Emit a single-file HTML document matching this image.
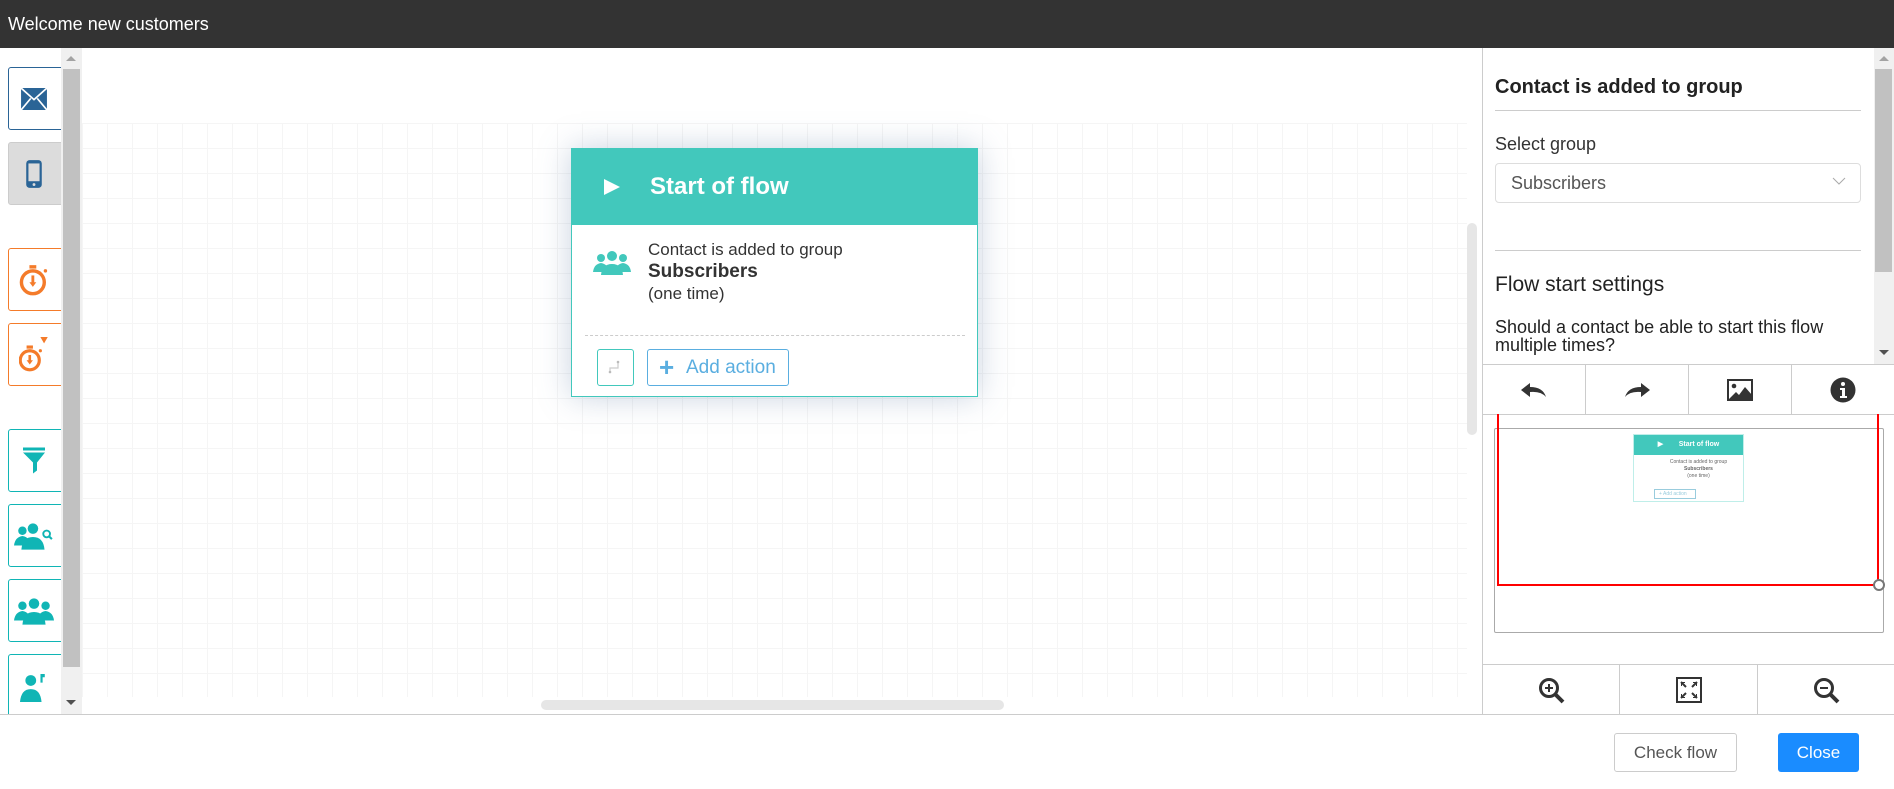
<!DOCTYPE html>
<html><head><meta charset="utf-8"><style>
*{box-sizing:border-box;margin:0;padding:0}
body{width:1894px;height:789px;overflow:hidden;background:#fff;font-family:"Liberation Sans",sans-serif;position:relative;color:#333}
.abs{position:absolute}
.hdr{left:0;top:0;width:1894px;height:48px;background:#333;color:#fff;font-size:18px;line-height:48px;padding-left:8px}
.sb{left:8px;width:60px;height:63px;border:1px solid;border-radius:3px;background:#fff;display:flex;align-items:center;justify-content:center;padding-right:8px}
.grid{left:82px;top:123px;width:1385px;height:574px;background-color:#fff;background-image:linear-gradient(#f5f5f5 1px,transparent 1px),linear-gradient(90deg,#f5f5f5 1px,transparent 1px);background-size:25px 25px}
.card{left:571px;top:148px;width:407px;height:249px;border:1px solid #42c8bc;background:#fff;box-shadow:0 0 30px rgba(100,130,170,.35)}
.tb{display:flex;align-items:center;justify-content:center;border-right:1px solid #ccc}
</style></head><body>
<div class="abs hdr">Welcome new customers</div>

<!-- left sidebar -->
<div class="abs" style="left:0;top:48px;width:82px;height:666px;background:#fff;border-right:1px solid #ccc;overflow:hidden">
<div class="abs sb" style="top:19px;border-color:#2a6496"><svg width="26" height="22" viewBox="0 0 20 17"><rect x="0" y="0" width="20" height="17" fill="#2a6496"/><path d="M0 0L10 9L20 0M0 17L7.5 8M20 17L12.5 8" stroke="#fff" stroke-width="1.3" fill="none"/></svg></div>
<div class="abs sb" style="top:94px;border-color:#ccc;background:#dcdcdc"><svg width="18" height="30" viewBox="0 0 16 27"><rect x="1" y="1" width="14" height="25" rx="3" fill="#2a6496"/><rect x="3" y="4" width="10" height="16" fill="#dcdcdc"/><circle cx="8" cy="23" r="1.3" fill="#dcdcdc"/></svg></div>
<div class="abs sb" style="top:200px;border-color:#f47b2a"><svg width="30" height="32" viewBox="0 0 26 28"><circle cx="12" cy="16" r="10" fill="none" stroke="#f47b2a" stroke-width="3"/><rect x="9" y="1" width="6" height="3" fill="#f47b2a"/><circle cx="23" cy="6" r="1.5" fill="#f47b2a"/><path d="M12 10v7" stroke="#f47b2a" stroke-width="2.5"/><path d="M9 16l3 4 3-4z" fill="#f47b2a"/></svg></div>
<div class="abs sb" style="top:275px;border-color:#f47b2a"><svg width="30" height="36" viewBox="0 0 28 34"><circle cx="10" cy="22" r="9" fill="none" stroke="#f47b2a" stroke-width="3"/><rect x="7" y="8" width="6" height="3" fill="#f47b2a"/><circle cx="20" cy="13" r="1.5" fill="#f47b2a"/><path d="M10 17v6" stroke="#f47b2a" stroke-width="2.5"/><path d="M7 22l3 4 3-4z" fill="#f47b2a"/><path d="M20 0h7l-3.5 6z" fill="#f47b2a"/></svg></div>
<div class="abs sb" style="top:381px;border-color:#10b5b5"><svg width="22" height="27" viewBox="0 0 22 26"><rect x="0" y="0" width="22" height="3" fill="#10b5b5"/><path d="M0 5h22l-8 10v8l-4 3V15z" fill="#10b5b5"/></svg></div>
<div class="abs sb" style="top:456px;border-color:#10b5b5"><svg width="40" height="28" viewBox="0 0 38 26"><g fill="#10b5b5"><circle cx="8" cy="8" r="4"/><path d="M0 22q1-8 8-9q7 1 8 9z"/><circle cx="18" cy="6" r="5"/><path d="M7 26q1-12 11-12q10 0 11 12z"/></g><circle cx="31" cy="11" r="3.2" fill="none" stroke="#10b5b5" stroke-width="1.8"/><path d="M33 13l3 3" stroke="#10b5b5" stroke-width="2"/></svg></div>
<div class="abs sb" style="top:531px;border-color:#10b5b5"><svg width="40" height="28" viewBox="0 0 38 26"><g fill="#10b5b5"><circle cx="8" cy="8" r="4"/><path d="M0 22q1-8 8-9q7 1 8 9z"/><circle cx="30" cy="8" r="4"/><path d="M22 22q1-8 8-9q7 1 8 9z"/><circle cx="19" cy="6" r="5"/><path d="M8 26q1-12 11-12q10 0 11 12z"/></g></svg></div>
<div class="abs sb" style="top:606px;height:70px;border-color:#10b5b5;align-items:flex-start;padding-top:19px"><svg width="28" height="28" viewBox="0 0 26 26"><g fill="#10b5b5"><circle cx="10" cy="6" r="5"/><path d="M0 26q1-12 10-12q9 0 10 12z"/><path d="M19 0h4v3h-2v5h-2z"/></g></svg></div>
</div>
<div class="abs" style="left:61px;top:48px;width:21px;height:666px;background:#f0f0f0"></div>
<div class="abs" style="left:63px;top:69px;width:17px;height:598px;background:#c1c1c1"></div>
<div class="abs" style="left:66px;top:56px;width:0;height:0;border:5px solid transparent;border-bottom-color:#a3a3a3;border-top:0"></div>
<div class="abs" style="left:66px;top:700px;width:0;height:0;border:5px solid transparent;border-top-color:#505050;border-bottom:0"></div>

<!-- canvas -->
<div class="abs grid"></div>
<div class="abs" style="left:1467px;top:223px;width:10px;height:212px;background:#e6e6e6;border-radius:5px"></div>
<div class="abs" style="left:541px;top:700px;width:463px;height:10px;background:#e6e6e6;border-radius:5px"></div>

<div class="abs card">
 <div style="height:76px;background:#42c8bc;color:#fff;font-size:24px;font-weight:bold;display:flex;align-items:center"><svg style="margin-left:31px;margin-right:29px" width="18" height="18" viewBox="0 0 18 18"><path d="M1 1l16 8-16 8z" fill="#fff"/></svg>Start of flow</div>
 <svg class="abs" style="left:21px;top:102px" width="38" height="24" viewBox="0 0 38 24"><g fill="#42c8bc"><circle cx="8" cy="7" r="4"/><path d="M0 21q1-8 8-9q7 1 8 9z"/><circle cx="30" cy="7" r="4"/><path d="M22 21q1-8 8-9q7 1 8 9z"/><circle cx="19" cy="5" r="5"/><path d="M8 24q1-11 11-11q10 0 11 11z"/></g></svg>
 <div class="abs" style="left:76px;top:90px;font-size:17px;line-height:22px;color:#333">Contact is added to group<br><b style="font-size:19px">Subscribers</b><br>(one time)</div>
 <div class="abs" style="left:13px;top:186px;width:380px;border-top:1px dashed #ccc"></div>
 <div class="abs" style="left:25px;top:200px;width:37px;height:37px;border:1px solid #42c8bc;border-radius:3px"><svg style="margin:10px" width="14" height="14" viewBox="0 0 14 14"><path d="M2 12V8h8V2" stroke="#ccc" stroke-width="1.2" fill="none"/><circle cx="2" cy="12" r="1.3" fill="#bbb"/><circle cx="10" cy="2" r="1.3" fill="#bbb"/></svg></div>
 <div class="abs" style="left:75px;top:200px;width:142px;height:37px;border:1px solid #5aaee0;border-radius:3px;color:#5aaee0;font-size:19px;line-height:35px;padding-left:38px">Add action<span class="abs" style="left:11px;top:0;font-size:26px;font-weight:bold">+</span></div>
</div>

<!-- right panel -->
<div class="abs" style="left:1482px;top:48px;width:1px;height:666px;background:#ccc"></div>
<div class="abs" style="left:1495px;top:76px;font-size:20px;font-weight:bold;color:#222">Contact is added to group</div>
<div class="abs" style="left:1495px;top:110px;width:366px;height:1px;background:#ccc"></div>
<div class="abs" style="left:1495px;top:134px;font-size:18px;color:#333">Select group</div>
<div class="abs" style="left:1495px;top:163px;width:366px;height:40px;border:1px solid #ddd;border-radius:4px;font-size:18px;color:#555;line-height:38px;padding-left:15px">Subscribers<svg class="abs" style="right:14px;top:13px" width="14" height="9" viewBox="0 0 14 9"><path d="M1 1l6 6 6-6" stroke="#aaa" fill="none"/></svg></div>
<div class="abs" style="left:1495px;top:250px;width:366px;height:1px;background:#ccc"></div>
<div class="abs" style="left:1495px;top:273px;font-size:21px;color:#222">Flow start settings</div>
<div class="abs" style="left:1495px;top:318px;font-size:18px;line-height:18px;color:#222">Should a contact be able to start this flow<br>multiple times?</div>
<div class="abs" style="left:1874px;top:48px;width:20px;height:316px;background:#f0f0f0"></div>
<div class="abs" style="left:1875px;top:69px;width:17px;height:203px;background:#c1c1c1"></div>
<div class="abs" style="left:1879px;top:56px;border:5px solid transparent;border-bottom-color:#a3a3a3;border-top:0"></div>
<div class="abs" style="left:1879px;top:350px;border:5px solid transparent;border-top-color:#505050;border-bottom:0"></div>

<div class="abs" style="left:1483px;top:364px;width:411px;height:51px;border-top:1px solid #ccc;border-bottom:1px solid #ccc;display:flex">
 <div class="tb" style="width:103px"><svg width="26" height="16" viewBox="0 0 26 16"><path d="M0 8L9 1v4q13 0 16 10q-5-6-16-5v5z" fill="#333"/></svg></div>
 <div class="tb" style="width:103px"><svg width="26" height="16" viewBox="0 0 26 16"><path d="M26 8L17 1v4Q4 5 1 15q5-6 16-5v5z" fill="#333"/></svg></div>
 <div class="tb" style="width:103px"><svg width="26" height="22" viewBox="0 0 26 22"><rect x="1" y="1" width="24" height="20" fill="none" stroke="#333" stroke-width="2"/><circle cx="7" cy="7" r="2.3" fill="#333"/><path d="M2 20l7-7 3 3 6-8 7 8v4z" fill="#333"/></svg></div>
 <div class="tb" style="width:102px;border:0"><svg width="26" height="26" viewBox="0 0 26 26"><circle cx="13" cy="13" r="12.5" fill="#333"/><circle cx="13" cy="7" r="2" fill="#fff"/><path d="M10 11h5v8h2v2h-7v-2h2v-6h-2z" fill="#fff"/></svg></div>
</div>

<div class="abs" style="left:1494px;top:428px;width:390px;height:205px;border:1px solid #aaa;border-radius:2px;background:#fff"></div>
<div class="abs" style="left:1633px;top:434px;width:111px;height:68px;border:1px solid #bfeee9;background:#fff">
 <div style="height:20px;background:#42c8bc;color:#fff;font-size:7px;font-weight:bold;line-height:20px;text-align:center">&#9654;&nbsp;&nbsp;&nbsp;&nbsp;&nbsp;&nbsp;&nbsp; Start of flow</div>
 <div style="font-size:5px;line-height:7px;text-align:center;color:#666;padding-top:4px;padding-left:20px">Contact is added to group<br><b>Subscribers</b><br>(one time)</div>
 <div class="abs" style="left:20px;top:54px;width:42px;height:10px;border:1px solid #9cd;font-size:5px;color:#9cd;line-height:8px;padding-left:4px">+ Add action</div>
</div>
<div class="abs" style="left:1497px;top:414px;width:382px;height:172px;border:2px solid #f00;border-top:0"></div>
<div class="abs" style="left:1873px;top:579px;width:12px;height:12px;border:2px solid #777;border-radius:50%;background:#fff"></div>

<div class="abs" style="left:1483px;top:664px;width:411px;height:51px;border-top:1px solid #ccc;display:flex">
 <div class="tb" style="width:137px"><svg width="27" height="27" viewBox="0 0 27 27"><circle cx="11" cy="11" r="8.5" fill="none" stroke="#333" stroke-width="3"/><path d="M17 17l8 8" stroke="#333" stroke-width="4"/><path d="M11 7v8M7 11h8" stroke="#333" stroke-width="2"/></svg></div>
 <div class="tb" style="width:138px"><svg width="26" height="26" viewBox="0 0 26 26"><rect x="1" y="1" width="24" height="24" fill="none" stroke="#333" stroke-width="2"/><path d="M5 5l5 5M21 5l-5 5M5 21l5-5M21 21l-5-5" stroke="#333" stroke-width="2"/><path d="M5 5h4v1H6v3H5zM21 5h-4v1h3v3h1zM5 21h4v-1H6v-3H5zM21 21h-4v-1h3v-3h1z" fill="#333"/></svg></div>
 <div class="tb" style="width:136px;border:0"><svg width="27" height="27" viewBox="0 0 27 27"><circle cx="11" cy="11" r="8.5" fill="none" stroke="#333" stroke-width="3"/><path d="M17 17l8 8" stroke="#333" stroke-width="4"/><path d="M7 11h8" stroke="#333" stroke-width="2"/></svg></div>
</div>

<!-- footer -->
<div class="abs" style="left:0;top:714px;width:1894px;height:1px;background:#ccc"></div>
<div class="abs" style="left:1614px;top:733px;width:123px;height:39px;border:1px solid #ccc;border-radius:3px;font-size:17px;color:#555;text-align:center;line-height:37px">Check flow</div>
<div class="abs" style="left:1778px;top:733px;width:81px;height:39px;background:#1a8cff;border-radius:3px;font-size:17px;color:#fff;text-align:center;line-height:39px">Close</div>
</body></html>
